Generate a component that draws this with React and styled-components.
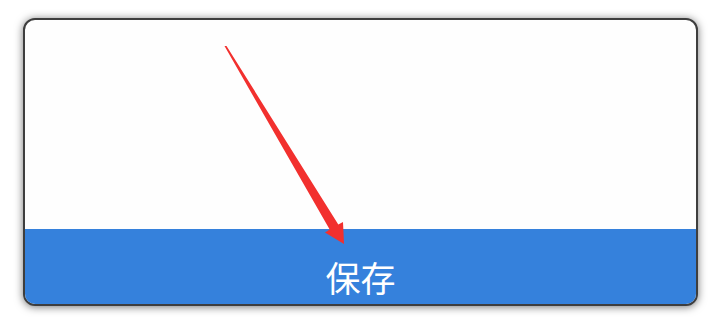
import React from 'react'
import styled, { createGlobalStyle } from 'styled-components'

const GlobalStyle = createGlobalStyle`
  html, body {
    margin: 0;
    padding: 0;
    background: #ffffff;
  }
  body {
    font-family: "Noto Sans CJK SC", "Noto Sans", sans-serif;
  }
`

const Page = styled.div`
  position: relative;
  width: 720px;
  height: 323px;
  box-sizing: border-box;
  padding: 18px 22px 17px 23px;
`

const Card = styled.div`
  height: 100%;
  box-sizing: border-box;
  display: flex;
  flex-direction: column;
  border: 2px solid #3e3e3e;
  border-radius: 12px;
  overflow: hidden;
  background: #fefefe;
  box-shadow: 0 1px 8px rgba(0, 0, 0, 0.55);
`

const Content = styled.div`
  flex: 1;
`

const SaveButton = styled.button`
  height: 75px;
  flex-shrink: 0;
  display: flex;
  align-items: center;
  justify-content: center;
  padding: 19px 0 0;
  border: none;
  background: #3581dc;
  color: #ffffff;
  font-family: "Noto Sans CJK SC", sans-serif;
  font-size: 35px;
  line-height: 1;
  cursor: pointer;
`

const Annotation = styled.svg`
  position: absolute;
  left: 0;
  top: 0;
  pointer-events: none;
`

const Arrow = () => (
  <Annotation width="720" height="323" viewBox="0 0 720 323">
    <polygon
      points="224.5,46 329.7,229.6 325,232.5 344,244 343,222 338.3,224.4 226.5,46"
      fill="#f2302e"
    />
  </Annotation>
)

const App = () => {
  return (
    <>
      <GlobalStyle />
      <Page>
        <Card>
          <Content />
          <SaveButton>保存</SaveButton>
        </Card>
        <Arrow />
      </Page>
    </>
  )
}

export default App
